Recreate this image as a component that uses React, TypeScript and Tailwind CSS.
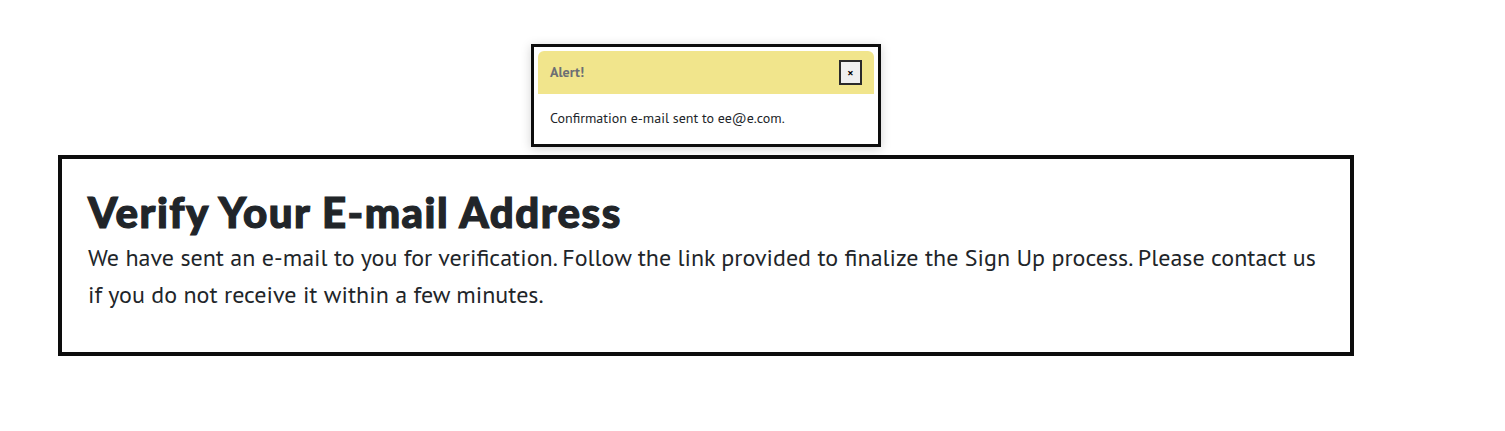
export default function App() {
  return (
    <div className="min-h-[431px] bg-white text-[#212529]">
      <div className="ml-[58px] w-[1296px] pt-[44px]">
        <div className="mx-auto w-[350px] border-[3px] border-[#0d0d0d] bg-white p-[4px] shadow-[0_2px_10px_rgba(0,0,0,0.18)]">
          <div className="flex h-[43px] items-center justify-between rounded-t-[6px] bg-[#f1e58c] pl-[12px] pr-[12px]">
            <span className="text-[14px] font-bold text-[#6c6f74]" style={{ fontFamily: '"PT Sans", "Noto Sans", sans-serif' }}>Alert!</span>
            <button className="flex h-[25px] w-[23px] items-center justify-center border-2 border-[#2a2a2a] bg-[#efefef] text-[11px] font-bold leading-none text-black" style={{ fontFamily: '"Noto Sans", sans-serif' }}>×</button>
          </div>
          <div className="px-[12px] pb-[12px] pt-[14px] text-[14px] leading-[20px] text-[#212529]" style={{ fontFamily: '"PT Sans", "Noto Sans", sans-serif' }}>
            Confirmation e-mail sent to ee@e.com.
          </div>
        </div>
        <div className="mt-[8px] h-[201px] border-[4px] border-[#0d0d0d] px-[26px] pt-[28px]">
          <h1 className="text-[42px] font-black leading-[50px] tracking-[1.5px] text-[#212529] [-webkit-text-stroke:1.2px_#212529]" style={{ fontFamily: 'Lato, "Noto Sans", sans-serif' }}>Verify Your E-mail Address</h1>
          <p className="mt-[2px] text-[24px] leading-[37px] text-[#212529]" style={{ fontFamily: '"PT Sans", "Noto Sans", sans-serif' }}>
            We have sent an e-mail to you for verification. Follow the link provided to finalize the Sign Up process. Please contact us if you do not receive it within a few minutes.
          </p>
        </div>
      </div>
    </div>
  );
}
